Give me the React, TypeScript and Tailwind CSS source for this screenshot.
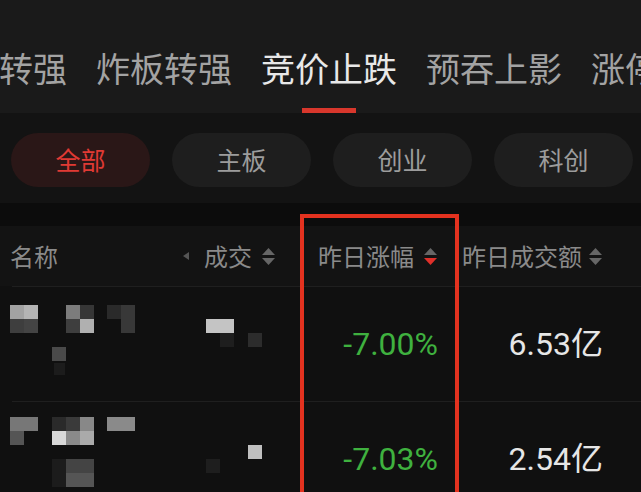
const FONT = '"Noto Sans CJK SC", "Noto Sans", sans-serif';
const NUM_FONT = 'Roboto, "Noto Sans CJK SC", sans-serif';

const tabs = ['转强', '炸板转强', '竞价止跌', '预吞上影', '涨停反包'];
const pills = ['全部', '主板', '创业', '科创'];

type Block = [number, number, number, number, string];

const rows: { pct: string; amount: string; blocks: Block[] }[] = [
  {
    pct: '-7.00%',
    amount: '6.53亿',
    blocks: [
      [10, 18, 14, 14, '#a2a2a2'],
      [24, 18, 14, 14, '#b4b4b4'],
      [10, 32, 14, 14, '#3e3e3e'],
      [24, 32, 14, 14, '#444444'],
      [66, 18, 14, 14, '#7c7c7c'],
      [80, 18, 14, 14, '#363636'],
      [66, 32, 14, 14, '#3e3e3e'],
      [80, 32, 14, 14, '#b0b0b0'],
      [107, 18, 14, 14, '#2a2a2a'],
      [121, 18, 14, 28, '#383838'],
      [52, 60, 14, 14, '#4a4a4a'],
      [54, 76, 11, 12, '#1c1c1c'],
      [206, 32, 28, 14, '#c4c4c4'],
      [220, 46, 14, 14, '#1e1e1e'],
      [248, 46, 14, 14, '#2c2c2c'],
    ],
  },
  {
    pct: '-7.03%',
    amount: '2.54亿',
    blocks: [
      [10, 15, 28, 14, '#777777'],
      [10, 29, 14, 14, '#555555'],
      [52, 15, 14, 14, '#2a2a2a'],
      [66, 15, 14, 14, '#3a3a3a'],
      [80, 15, 14, 14, '#888888'],
      [52, 29, 14, 14, '#d8d8d8'],
      [66, 29, 14, 14, '#8a8a8a'],
      [80, 29, 14, 14, '#aaaaaa'],
      [107, 15, 28, 14, '#8a8a8a'],
      [52, 57, 14, 28, '#1c1c1c'],
      [66, 57, 28, 14, '#444444'],
      [66, 71, 28, 14, '#555555'],
      [248, 43, 14, 14, '#c0c0c0'],
      [206, 57, 14, 14, '#1e1e1e'],
    ],
  },
];

function SortIcon({ active = false }: { active?: boolean }) {
  return (
    <svg width="13" height="17" viewBox="0 0 13 17" aria-hidden>
      <polygon points="6.5,0 13,7 0,7" fill="#666" />
      <polygon points="0,10 13,10 6.5,17" fill={active ? '#e0302a' : '#666'} />
    </svg>
  );
}

export default function App() {
  return (
    <div
      className="relative h-[492px] w-[641px] overflow-hidden bg-[#101010]"
      style={{ fontFamily: FONT }}
    >
      {/* tab strip */}
      <div className="flex h-[113px] items-end gap-[29px] overflow-hidden whitespace-nowrap bg-[#1a1a1a] pl-0 -ml-px">
        {tabs.map((t, i) => (
          <div key={t} className="flex shrink-0 flex-col items-center">
            <span
              className={`text-[34px] leading-[40px] ${
                i === 2 ? 'text-[#e8e8e8]' : 'text-[#a3a3a3]'
              }`}
            >
              {t}
            </span>
            <div
              className={`mt-[20px] h-[5px] w-[54px] ${i === 2 ? 'bg-[#d8372c]' : 'bg-transparent'}`}
            />
          </div>
        ))}
      </div>

      {/* market filter pills */}
      <div className="flex h-[90px] gap-[22px] bg-[#131313] pl-[11px] pt-[20px]">
        {pills.map((p, i) => (
          <div
            key={p}
            className={`flex h-[54px] w-[139px] shrink-0 items-center justify-center rounded-full text-[25px] ${
              i === 0 ? 'bg-[#2a1717] text-[#e03a34]' : 'bg-[#1e1e1e] text-[#9c9c9c]'
            }`}
          >
            {p}
          </div>
        ))}
      </div>

      <div className="h-[23px] bg-[#0c0c0c]" />

      {/* header */}
      <div className="grid h-[60px] grid-cols-[180px_120px_158px_1fr] items-center bg-[#131313] text-[24px] text-[#8a8a8a]">
        <div className="pl-[10px]">名称</div>
        <div className="flex items-center pl-[3px]">
          <svg width="6" height="8" viewBox="0 0 6 8" aria-hidden>
            <polygon points="6,0 6,8 0,4" fill="#555" />
          </svg>
          <span className="ml-[15px]">成交</span>
          <span className="ml-[10px] flex">
            <SortIcon />
          </span>
        </div>
        <div className="flex items-center justify-end gap-[10px] pr-[21px]">
          <span>昨日涨幅</span>
          <SortIcon active />
        </div>
        <div className="flex items-center justify-end gap-[7px] pr-[39px]">
          <span>昨日成交额</span>
          <SortIcon />
        </div>
      </div>
      <div className="ml-[12px] h-px bg-[#1f1f1f]" />

      {/* rows */}
      {rows.map((r) => (
        <div key={r.pct}>
          <div className="grid h-[114px] grid-cols-[300px_158px_1fr] bg-[#101010]">
            <svg width="300" height="114" viewBox="0 0 300 114" aria-hidden>
              {r.blocks.map(([x, y, w, h, c], k) => (
                <rect key={k} x={x} y={y} width={w} height={h} fill={c} />
              ))}
            </svg>
            <div
              className="flex items-center justify-end pr-[20px] text-[32px] text-[#3fb13f]"
              style={{ fontFamily: NUM_FONT }}
            >
              {r.pct}
            </div>
            <div
              className="flex items-center justify-end pr-[38px] text-[32px] text-[#e6e6e6]"
              style={{ fontFamily: NUM_FONT }}
            >
              {r.amount}
            </div>
          </div>
          <div className="ml-[12px] h-px bg-[#1f1f1f]" />
        </div>
      ))}

      {/* highlight box drawn over the table */}
      <div className="pointer-events-none absolute left-[300px] top-[214px] h-[300px] w-[159px] border-[4px] border-[#e3321f]" />
    </div>
  );
}
